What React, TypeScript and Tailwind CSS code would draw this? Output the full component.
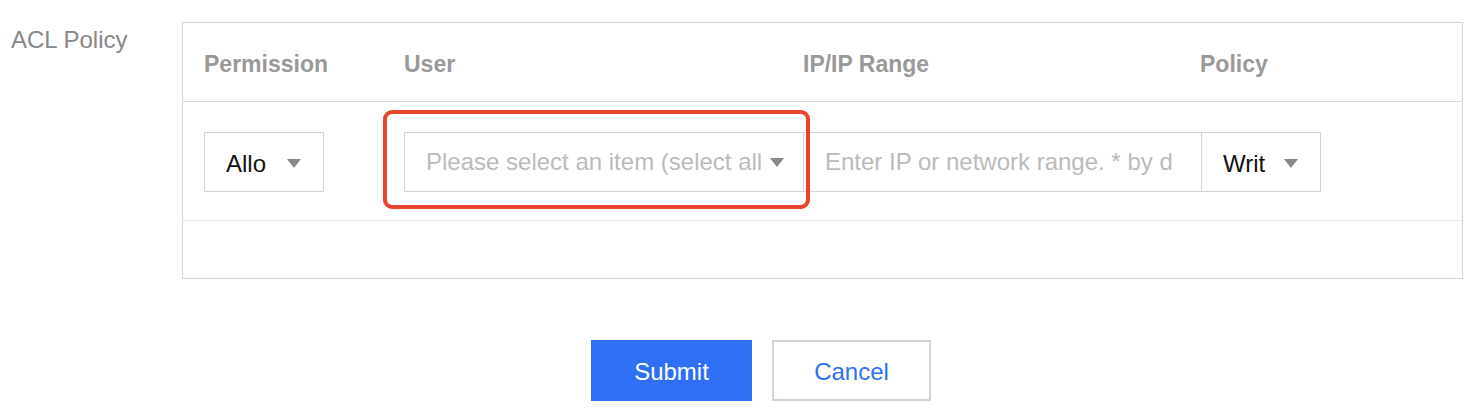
import React from 'react'

const Caret: React.FC = () => (
  <svg width="14" height="9" viewBox="0 0 14 9" className="shrink-0">
    <path d="M0 0 H14 L7 9 Z" fill="#888888" />
  </svg>
)

const App: React.FC = () => {
  return (
    <div
      className="w-[1470px] h-[410px] bg-white overflow-hidden"
      style={{ fontFamily: '"Liberation Sans", Arial, sans-serif' }}
    >
      <div className="flex pt-[22px]">
        <div className="w-[182px] shrink-0 pl-[11px] pt-[3px] text-[24px] leading-[30px] text-[#888888]">
          ACL Policy
        </div>

        <div className="w-[1281px] border border-[#cfd5de]">
          <div className="grid grid-cols-[200px_399px_398px_1fr] h-[79px] pt-[4px] items-center border-b border-[#d4d9e1] text-[23px] font-bold text-[#999999]">
            <div className="pl-[21px]">Permission</div>
            <div className="pl-[21px]">User</div>
            <div className="pl-[21px]">IP/IP Range</div>
            <div className="pl-[20px]">Policy</div>
          </div>

          <div className="relative flex items-center h-[119px] pt-[2px] pl-[21px] border-b border-[#e6e9ee]">
            <div className="flex items-center justify-between w-[120px] h-[60px] border border-[#cfd5de] pl-[21px] pr-[22px] pt-[3px] text-[24px] text-[#111111]">
              <span>Allo</span>
              <Caret />
            </div>

            <div className="ml-[80px] flex items-center justify-between w-[400px] h-[60px] border border-[#cfd5de] pl-[21px] pr-[19px] text-[24px] text-[#bbbbbb]">
              <span className="whitespace-nowrap overflow-hidden">Please select an item (select all</span>
              <Caret />
            </div>

            <div className="-ml-px flex items-center w-[399px] h-[60px] border border-[#cfd5de] pl-[21px] pr-[20px] text-[24px] text-[#bbbbbb]">
              <span className="whitespace-nowrap overflow-hidden">Enter IP or network range. * by d</span>
            </div>

            <div className="-ml-px flex items-center justify-between w-[120px] h-[60px] border border-[#cfd5de] pl-[21px] pr-[22px] pt-[3px] text-[24px] text-[#111111]">
              <span>Writ</span>
              <Caret />
            </div>

            <div className="absolute left-[200px] top-[8px] w-[427px] h-[99px] border-[4px] border-[#e8432b] rounded-[9px] pointer-events-none" />
          </div>

          <div className="h-[57px]" />
        </div>
      </div>

      <div className="flex gap-[20px] pl-[591px] mt-[61px]">
        <button className="w-[161px] h-[61px] pt-[2px] bg-[#2f6ff6] text-white text-[24px]">
          Submit
        </button>
        <button className="w-[159px] h-[61px] pt-[2px] border-2 border-[#cfd5de] bg-white text-[#2f6ff6] text-[24px]">
          Cancel
        </button>
      </div>
    </div>
  )
}

export default App
